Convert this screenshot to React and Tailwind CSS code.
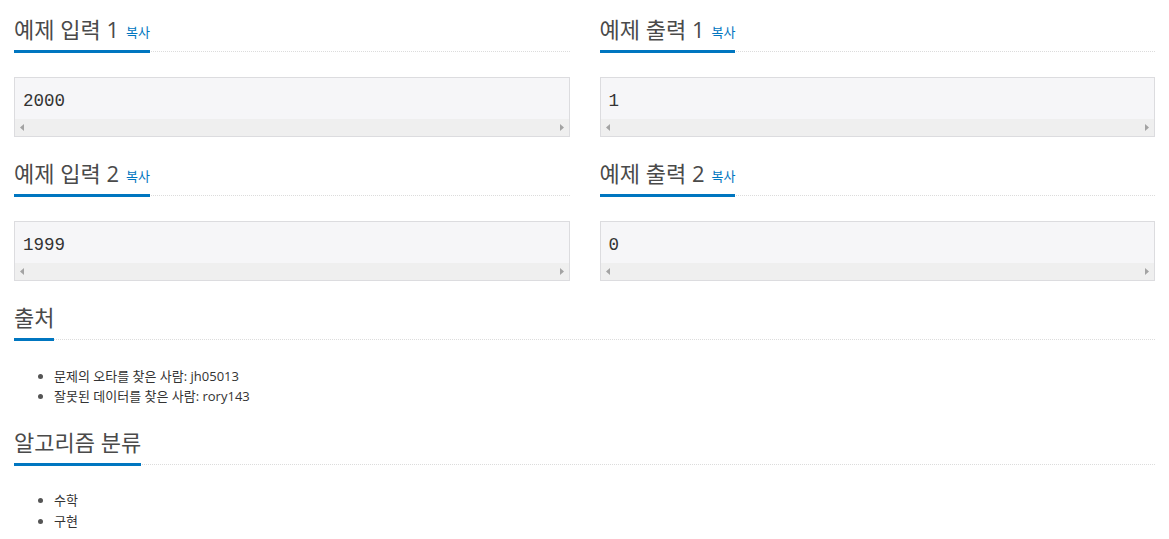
import React from "react";

const KR = { fontFamily: '"Open Sans", "Noto Sans CJK KR", sans-serif' };

function Headline({ title, copy }) {
  return (
    <div className="pt-[14px] border-b border-dotted border-[#dcdcdc]">
      <h2
        className="inline-block h-[39px] text-[22px] leading-[30px] text-[#4a4a4a] font-normal pb-[6px] border-b-[3px] border-[#0076c0] -mb-[2px] relative whitespace-nowrap"
        style={KR}
      >
        <span className="block h-[30px] leading-[30px]">
          {title}
          {copy && (
            <span className="text-[13px] text-[#0076c0] ml-[7px] align-[1px]">복사</span>
          )}
        </span>
      </h2>
    </div>
  );
}

function SampleBox({ value }) {
  return (
    <div className="mt-[25px] border border-[#dcdcdf] bg-[#f6f6f8]">
      <div
        className="h-[41px] px-[8px] pt-[12px] text-[17.5px] leading-[23px] text-[#333]"
        style={{ fontFamily: '"Liberation Mono", monospace' }}
      >
        {value}
      </div>
      <div className="h-[17px] bg-[#efefef] flex items-center justify-between px-[5px]">
        <svg width="4" height="7" viewBox="0 0 4 7">
          <path d="M4 0 L0 3.5 L4 7 Z" fill="#a3a3a3" />
        </svg>
        <svg width="4" height="7" viewBox="0 0 4 7">
          <path d="M0 0 L4 3.5 L0 7 Z" fill="#a3a3a3" />
        </svg>
      </div>
    </div>
  );
}

function Sample({ title, value }) {
  return (
    <div className="mb-[7px]">
      <Headline title={title} copy />
      <SampleBox value={value} />
    </div>
  );
}

function Bullets({ items, className }) {
  return (
    <ul
      className={"pl-[40px] list-disc text-[13px] text-[#333] marker:text-[#555] " + className}
      style={KR}
    >
      {items.map((t) => (
        <li key={t}>{t}</li>
      ))}
    </ul>
  );
}

export default function App() {
  return (
    <div className="w-[1169px] bg-white px-[14px]" style={KR}>
      <div className="grid grid-cols-2 gap-x-[30px]">
        <Sample title="예제 입력 1" value="2000" />
        <Sample title="예제 출력 1" value="1" />
        <Sample title="예제 입력 2" value="1999" />
        <Sample title="예제 출력 2" value="0" />
      </div>
      <div>
        <Headline title="출처" />
        <Bullets
          className="mt-[26px] leading-[20px]"
          items={["문제의 오타를 찾은 사람: jh05013", "잘못된 데이터를 찾은 사람: rory143"]}
        />
      </div>
      <div className="mt-[7px]">
        <Headline title="알고리즘 분류" />
        <Bullets className="mt-[25px] leading-[21px]" items={["수학", "구현"]} />
      </div>
    </div>
  );
}
